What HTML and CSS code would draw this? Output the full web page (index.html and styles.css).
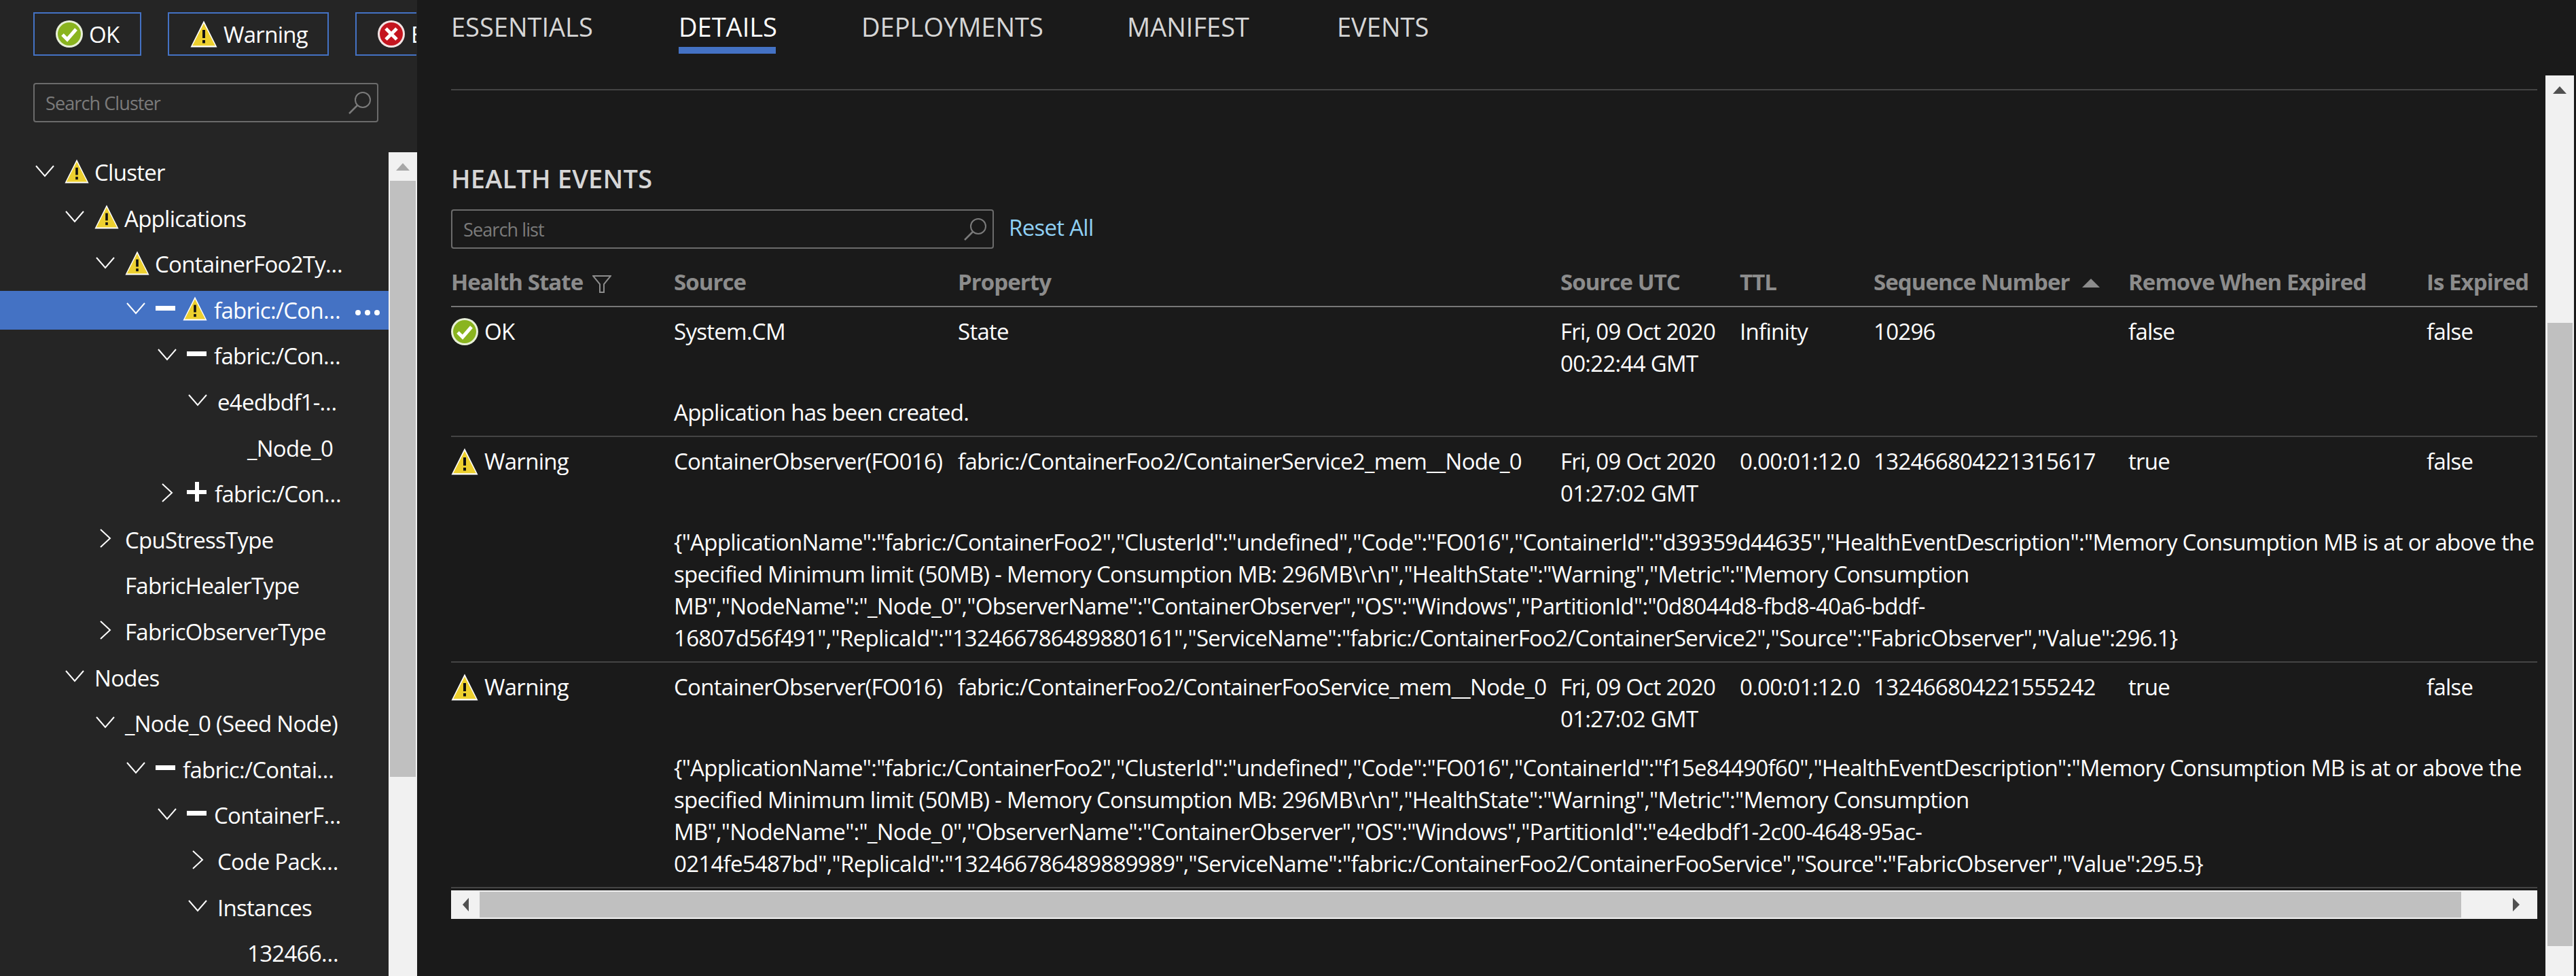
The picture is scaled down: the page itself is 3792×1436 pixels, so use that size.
FILE: index.html
```html
<!DOCTYPE html>
<html lang="en">
<head>
<meta charset="utf-8">
<title>Service Fabric Explorer</title>
<link rel="stylesheet" href="styles.css">
</head>
<body>
<svg class="defs" width="0" height="0" aria-hidden="true">
  <symbol id="warn" viewBox="0 0 40 40">
    <path d="M20 0.5 L39.5 39.5 H0.5 Z" fill="#fff"/>
    <path d="M20 4.5 L36.8 37.2 H3.2 Z" fill="#edd02f"/>
    <rect x="18" y="14" width="4" height="12" fill="#111"/>
    <rect x="18" y="29" width="4" height="4.5" fill="#111"/>
  </symbol>
  <symbol id="ok" viewBox="0 0 40 40">
    <circle cx="20" cy="20" r="20" fill="#e8f0d8"/>
    <circle cx="20" cy="20" r="17" fill="#8ab41f"/>
    <path d="M10 21 L17 28 L30 13" fill="none" stroke="#fff" stroke-width="5"/>
  </symbol>
  <symbol id="err" viewBox="0 0 40 40">
    <circle cx="20" cy="20" r="20" fill="#f3e4e4"/>
    <circle cx="20" cy="20" r="17" fill="#c4151f"/>
    <path d="M12 12 L28 28 M28 12 L12 28" fill="none" stroke="#fff" stroke-width="5"/>
  </symbol>
  <symbol id="search" viewBox="0 0 34 34">
    <circle cx="21" cy="13" r="11" fill="none" stroke="currentColor" stroke-width="2"/>
    <path d="M13 21 L1 33" fill="none" stroke="currentColor" stroke-width="2.5"/>
  </symbol>
  <symbol id="down" viewBox="0 0 28 18">
    <path d="M1 1 L14 16 L27 1" fill="none" stroke="currentColor" stroke-width="2"/>
  </symbol>
  <symbol id="right" viewBox="0 0 17 28">
    <path d="M1 1 L15 14 L1 27" fill="none" stroke="currentColor" stroke-width="2"/>
  </symbol>
</svg>

<div class="app">
  <aside class="sidebar">
    <div class="filters">
      <button class="filter f-ok"><svg class="ic40"><use href="#ok"/></svg><span>OK</span></button>
      <button class="filter f-warn"><svg class="ic40"><use href="#warn"/></svg><span>Warning</span></button>
      <button class="filter f-err"><svg class="ic40"><use href="#err"/></svg><span>E</span></button>
    </div>
    <div class="searchbox side-search"><span class="ph">Search Cluster</span><svg class="sic"><use href="#search"/></svg></div>
    <div class="treewrap">
      <div class="tree">
        <div class="row l0"><svg class="chev"><use href="#down"/></svg><svg class="ic35"><use href="#warn"/></svg><span class="lbl">Cluster</span></div>
        <div class="row l1"><svg class="chev"><use href="#down"/></svg><svg class="ic35"><use href="#warn"/></svg><span class="lbl">Applications</span></div>
        <div class="row l2"><svg class="chev"><use href="#down"/></svg><svg class="ic35"><use href="#warn"/></svg><span class="lbl">ContainerFoo2Ty…</span></div>
        <div class="row l3 sel"><svg class="chev"><use href="#down"/></svg><i class="dash"></i><svg class="ic35"><use href="#warn"/></svg><span class="lbl">fabric:/Con…</span><span class="dots"><b></b><b></b><b></b></span></div>
        <div class="row l4"><svg class="chev"><use href="#down"/></svg><i class="dash"></i><span class="lbl">fabric:/Con…</span></div>
        <div class="row l5"><svg class="chev"><use href="#down"/></svg><span class="lbl">e4edbdf1-…</span></div>
        <div class="row l6"><span class="nochev"></span><span class="lbl">_Node_0</span></div>
        <div class="row l4"><span class="chevbox"><svg class="chevr"><use href="#right"/></svg></span><i class="plus"></i><span class="lbl">fabric:/Con…</span></div>
        <div class="row l2"><span class="chevbox"><svg class="chevr"><use href="#right"/></svg></span><span class="lbl">CpuStressType</span></div>
        <div class="row l2"><span class="nochev"></span><span class="lbl">FabricHealerType</span></div>
        <div class="row l2"><span class="chevbox"><svg class="chevr"><use href="#right"/></svg></span><span class="lbl">FabricObserverType</span></div>
        <div class="row l1"><svg class="chev"><use href="#down"/></svg><span class="lbl">Nodes</span></div>
        <div class="row l2"><svg class="chev"><use href="#down"/></svg><span class="lbl">_Node_0 (Seed Node)</span></div>
        <div class="row l3"><svg class="chev"><use href="#down"/></svg><i class="dash"></i><span class="lbl">fabric:/Contai…</span></div>
        <div class="row l4"><svg class="chev"><use href="#down"/></svg><i class="dash"></i><span class="lbl">ContainerF…</span></div>
        <div class="row l5"><span class="chevbox"><svg class="chevr"><use href="#right"/></svg></span><span class="lbl">Code Pack…</span></div>
        <div class="row l5"><svg class="chev"><use href="#down"/></svg><span class="lbl">Instances</span></div>
        <div class="row l6"><span class="nochev"></span><span class="lbl">132466…</span></div>
      </div>
      <div class="vbar side-bar"><div class="vbtn"><i class="tri-up light"></i></div><div class="vthumb"></div></div>
    </div>
  </aside>

  <main class="main">
    <div class="content">
      <nav class="tabs">
        <span class="tab">ESSENTIALS</span>
        <span class="tab active">DETAILS</span>
        <span class="tab">DEPLOYMENTS</span>
        <span class="tab">MANIFEST</span>
        <span class="tab">EVENTS</span>
      </nav>
      <hr class="rule">
      <h2 class="heading">HEALTH EVENTS</h2>
      <div class="listbar">
        <div class="searchbox list-search"><span class="ph">Search list</span><svg class="sic"><use href="#search"/></svg></div>
        <a class="reset">Reset All</a>
      </div>
      <table class="grid">
        <colgroup><col class="c1"><col class="c2"><col class="c3"><col class="c4"><col class="c5"><col class="c6"><col class="c7"><col class="c8"></colgroup>
        <thead>
          <tr>
            <th><span class="thin">Health State<svg class="funnel" viewBox="0 0 28 26"><path d="M1 1 H27 L17 13 V25 H11 V13 Z" fill="none" stroke="#8c8c8c" stroke-width="2"/></svg></span></th>
            <th>Source</th><th>Property</th><th>Source UTC</th><th>TTL</th>
            <th><span class="thin">Sequence Number<i class="tri-up sort"></i></span></th>
            <th>Remove When Expired</th><th>Is Expired</th>
          </tr>
        </thead>
        <tbody>
          <tr class="main-row">
            <td><span class="state"><svg class="ic40"><use href="#ok"/></svg>OK</span></td>
            <td>System.CM</td><td>State</td><td>Fri, 09 Oct 2020<br>00:22:44 GMT</td><td>Infinity</td><td>10296</td><td>false</td><td>false</td>
          </tr>
          <tr class="desc-row"><td></td><td colspan="7">Application has been created.</td></tr>
          <tr class="main-row">
            <td><span class="state"><svg class="ic40"><use href="#warn"/></svg>Warning</span></td>
            <td>ContainerObserver(FO016)</td><td>fabric:/ContainerFoo2/ContainerService2_mem__Node_0</td><td>Fri, 09 Oct 2020<br>01:27:02 GMT</td><td>0.00:01:12.0</td><td>132466804221315617</td><td>true</td><td>false</td>
          </tr>
          <tr class="desc-row"><td></td><td colspan="7">{"ApplicationName":"fabric:/ContainerFoo2","ClusterId":"undefined","Code":"FO016","ContainerId":"d39359d44635","HealthEventDescription":"Memory Consumption MB is at or above the<br>specified Minimum limit (50MB) - Memory Consumption MB: 296MB\r\n","HealthState":"Warning","Metric":"Memory Consumption<br>MB","NodeName":"_Node_0","ObserverName":"ContainerObserver","OS":"Windows","PartitionId":"0d8044d8-fbd8-40a6-bddf-<br>16807d56f491","ReplicaId":"132466786489880161","ServiceName":"fabric:/ContainerFoo2/ContainerService2","Source":"FabricObserver","Value":296.1}</td></tr>
          <tr class="main-row">
            <td><span class="state"><svg class="ic40"><use href="#warn"/></svg>Warning</span></td>
            <td>ContainerObserver(FO016)</td><td>fabric:/ContainerFoo2/ContainerFooService_mem__Node_0</td><td>Fri, 09 Oct 2020<br>01:27:02 GMT</td><td>0.00:01:12.0</td><td>132466804221555242</td><td>true</td><td>false</td>
          </tr>
          <tr class="desc-row"><td></td><td colspan="7">{"ApplicationName":"fabric:/ContainerFoo2","ClusterId":"undefined","Code":"FO016","ContainerId":"f15e84490f60","HealthEventDescription":"Memory Consumption MB is at or above the<br>specified Minimum limit (50MB) - Memory Consumption MB: 296MB\r\n","HealthState":"Warning","Metric":"Memory Consumption<br>MB","NodeName":"_Node_0","ObserverName":"ContainerObserver","OS":"Windows","PartitionId":"e4edbdf1-2c00-4648-95ac-<br>0214fe5487bd","ReplicaId":"132466786489889989","ServiceName":"fabric:/ContainerFoo2/ContainerFooService","Source":"FabricObserver","Value":295.5}</td></tr>
        </tbody>
      </table>
      <div class="hbar"><div class="hbtn"><i class="tri-left"></i></div><div class="hthumb"></div><div class="hbtn end"><i class="tri-right"></i></div></div>
    </div>
    <div class="vbar main-bar"><div class="vbtn"><i class="tri-up"></i></div><div class="vthumb"></div></div>
  </main>
</div>
</body>
</html>
```
FILE: styles.css
```css
* { box-sizing: border-box; }
html, body { margin: 0; height: 100%; }
body {
  background: #1a1a1a;
  color: #fff;
  font-family: "Open Sans", "Noto Sans", sans-serif;
  font-size: 33px;
  letter-spacing: -0.72px;
  overflow: hidden;
}
.defs { position: absolute; }
.app { display: flex; height: 1436px; }

/* Sidebar */
.sidebar {
  width: 614px;
  flex: none;
  height: 100%;
  background: #252525;
  display: flex;
  flex-direction: column;
  overflow: hidden;
}
.filters {
  display: flex;
  gap: 39px;
  padding: 18px 0 0 49px;
  height: 82px;
  white-space: nowrap;
}
.filter {
  height: 64px;
  border: 2px solid #4472c4;
  background: transparent;
  color: #fff;
  font: inherit;
  letter-spacing: inherit;
  display: flex;
  align-items: center;
  gap: 9px;
  padding: 0 0 0 31px;
  flex: none;
}
.f-ok { width: 159px; }
.f-warn { width: 237px; }
.f-err { width: 90px; overflow: hidden; border-right: 0; }
.ic40 { width: 40px; height: 40px; flex: none; }
.ic35 { width: 36px; height: 36px; flex: none; margin: -4px 8px 0 0; }
.sel .ic35 { margin-right: 10px; }

.searchbox {
  display: flex;
  align-items: center;
  justify-content: space-between;
  height: 58px;
  border: 2px solid #6b6b6b;
  border-radius: 4px;
  padding: 0 8px 0 16px;
  flex: none;
}
.ph { color: #7b7b7b; font-size: 27px; letter-spacing: -0.9px; }
.sic { width: 34px; height: 34px; color: #7b7b7b; flex: none; }
.side-search { width: 508px; margin: 40px 0 0 49px; }

.treewrap { flex: 1; display: flex; min-height: 0; margin-top: 44px; }
.tree {
  flex: 1;
  min-width: 0;
  display: flex;
  flex-direction: column;
  gap: 10.6px;
  padding-top: 1px;
  overflow: hidden;
}
.row {
  flex: none;
  height: 57px;
  display: flex;
  align-items: center;
  white-space: nowrap;
  position: relative;
}
.l0 { padding-left: 52px; }
.l1 { padding-left: 96px; }
.l2 { padding-left: 141px; }
.l3 { padding-left: 186px; }
.l4 { padding-left: 232px; }
.l5 { padding-left: 277px; }
.l6 { padding-left: 321px; }
.sel { background: #4472c4; }
.chev, .chevbox, .nochev { width: 28px; height: 18px; flex: none; margin-right: 15px; }
.chev { color: #fff; margin-top: -4px; }
.chevbox { display: flex; justify-content: center; align-items: center; height: 28px; margin-top: -4px; }
.chevr { width: 17px; height: 28px; color: #fff; }
.dash { width: 29px; height: 7px; background: #fff; flex: none; margin: -6px 11px 0 0; }
.plus {
  width: 29px; height: 29px; flex: none; margin: -6px 12px 0 0;
  background: linear-gradient(#fff, #fff) center / 100% 6px no-repeat,
              linear-gradient(#fff, #fff) center / 6px 100% no-repeat;
}
.dots { position: absolute; left: 523px; top: 28px; display: flex; gap: 6px; }
.dots b { width: 8px; height: 8px; border-radius: 50%; background: #fff; }

/* Scrollbars */
.vbar { background: #f1f1f1; flex: none; display: flex; flex-direction: column; align-items: center; }
.vbtn { width: 100%; display: flex; justify-content: center; }
.side-bar { width: 42px; }
.side-bar .vbtn { height: 42px; padding-top: 16px; }
.side-bar .vthumb { width: 38px; height: 877px; background: #c0c0c0; }
.main-bar { width: 42px; height: 1325px; margin: 111px 3px 0 0; }
.main-bar .vbtn { height: 364px; padding-top: 16px; }
.main-bar .vthumb { width: 37px; height: 917px; background: #c0c0c0; }
.tri-up { width: 0; height: 0; border-left: 10px solid transparent; border-right: 10px solid transparent; border-bottom: 11px solid #505050; display: block; }
.tri-up.light { border-bottom-color: #a8a8a8; }
.tri-left, .tri-right { width: 0; height: 0; border-top: 10px solid transparent; border-bottom: 10px solid transparent; display: block; }
.tri-left { border-right: 9px solid #505050; }
.tri-right { border-left: 10px solid #505050; }

/* Main */
.main { flex: 1; min-width: 0; display: flex; justify-content: space-between; padding-left: 50px; }
.content { width: 3071px; flex: none; }
.tabs { display: flex; height: 79px; padding-top: 11px; font-size: 38px; letter-spacing: 0; color: #d6d6d6; white-space: nowrap; }
.tab { height: 68px; line-height: 56px; }
.tab:nth-child(1) { width: 335px; }
.tab:nth-child(2) { width: 269px; }
.tab:nth-child(3) { width: 391px; }
.tab:nth-child(4) { width: 309px; }
.tab.active { width: 143px; margin-right: 126px; color: #fff; border-bottom: 10px solid #4472c4; }
.rule { border: 0; height: 2px; background: #444; margin: 52px 0 0; }
.heading { margin: 104px 0 0; font-size: 38px; font-weight: 600; letter-spacing: 0.2px; color: #d6d6d6; line-height: 50px; height: 50px; }
.listbar { display: flex; align-items: center; gap: 22px; margin-top: 21px; }
.list-search { width: 799px; }
.reset { color: #8fd0f4; margin-top: -6px; }

.grid { border-collapse: collapse; table-layout: fixed; width: 3071px; margin-top: 19px; }
.c1 { width: 328px; } .c2 { width: 418px; } .c3 { width: 887px; } .c4 { width: 264px; }
.c5 { width: 197px; } .c6 { width: 375px; } .c7 { width: 439px; } .c8 { width: 163px; }
th {
  text-align: left; font-weight: 700; letter-spacing: -0.95px; color: #8c8c8c; padding: 0; height: 66px;
  border-bottom: 2px solid #777; white-space: nowrap; vertical-align: top; line-height: 60px;
}
.thin { display: inline-flex; align-items: center; }
.funnel { width: 28px; height: 26px; margin: 6px 0 0 14px; }
.sort { margin-left: 18px; margin-top: 2px; border-left-width: 13px; border-right-width: 13px; border-bottom: 13px solid #8c8c8c; }
td { padding: 0; line-height: 47px; vertical-align: top; white-space: nowrap; }
.main-row td { padding-top: 12px; }
.desc-row td { padding: 25px 0 11px; border-bottom: 2px solid #444; }
.state { display: inline-flex; align-items: center; gap: 9px; }

.hbar { display: flex; height: 42px; margin-top: 3px; background: #f1f1f1; align-items: center; width: 3071px; }
.hbtn { width: 42px; flex: none; display: flex; justify-content: center; }
.hthumb { width: 2917px; height: 38px; background: #c0c0c0; }
.hbtn.end { margin-left: auto; width: 70px; padding-left: 8px; }
```
